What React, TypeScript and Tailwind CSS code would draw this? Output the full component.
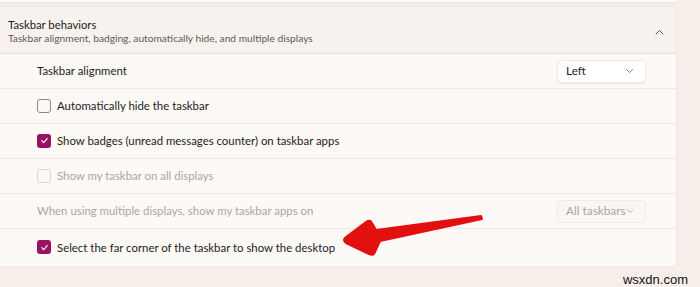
const FONT = "font-['Lato','Noto_Sans',sans-serif]";

function Check({ checked, disabled }: { checked?: boolean; disabled?: boolean }) {
  if (checked) {
    return (
      <span className="flex h-[14px] w-[14px] items-center justify-center rounded-[3px] bg-[#9b1262]">
        <svg width="9" height="9" viewBox="0 0 10 10" fill="none" stroke="white" strokeWidth="1.3" strokeLinecap="round" strokeLinejoin="round">
          <path d="M2 5.2 4.1 7.3 8 2.8" />
        </svg>
      </span>
    );
  }
  return (
    <span
      className={`h-[14px] w-[14px] rounded-[3px] border bg-[#fbf8f6] ${
        disabled ? "border-[#d9d4d1]" : "border-[#8c8886]"
      }`}
    />
  );
}

function Chevron({ up, color = "#6b6664" }: { up?: boolean; color?: string }) {
  return (
    <svg width="9" height="6" viewBox="0 0 9 6" fill="none" stroke={color} strokeWidth="1" strokeLinecap="round" strokeLinejoin="round">
      {up ? <path d="M1 5 4.5 1.5 8 5" /> : <path d="M1.5 1.5 4.5 4.5 7.5 1.5" />}
    </svg>
  );
}

function Select({ label, disabled }: { label: string; disabled?: boolean }) {
  return (
    <div
      className={`flex h-[23px] w-[89px] items-center justify-between whitespace-nowrap rounded-[4px] pl-[8px] pr-[11px] text-[11.8px] ${
        disabled
          ? "bg-[#fbf6f3] text-[#aaa6a4] border border-[#f1ebe8]"
          : "bg-white text-[#1c1c1c] shadow-[0_1px_2px_rgba(0,0,0,0.08)] border border-[#f0ebe8]"
      }`}
    >
      <span>{label}</span>
      <Chevron color={disabled ? "#b9b4b2" : "#8a8583"} />
    </div>
  );
}

function Row({ children, last }: { children: React.ReactNode; last?: boolean }) {
  return (
    <div
      className={`flex items-center justify-between pl-[37px] pr-[30px] ${
        last ? "h-[37px]" : "h-[35px] border-b border-[#efe9e6]"
      }`}
    >
      {children}
    </div>
  );
}

function CheckRow({ label, checked, disabled, last }: { label: string; checked?: boolean; disabled?: boolean; last?: boolean }) {
  return (
    <Row last={last}>
      <div className="flex items-center gap-[6px]">
        <Check checked={checked} disabled={disabled} />
        <span className={`text-[11.4px] ${disabled ? "text-[#aaa6a4]" : "text-[#1c1c1c]"}`}>{label}</span>
      </div>
    </Row>
  );
}

export default function App() {
  return (
    <div className={`relative h-[287px] w-[700px] overflow-hidden bg-[#f7eeea] ${FONT}`}>
      <div className="h-[3px] w-[677px] border-b border-[#ece5e2] bg-[#fcf8f6]" />
      <div className="mt-[3px] w-[677px] border border-l-0 border-[#eee7e4] rounded-r-[4px] bg-[#fdf9f7]">
        <div className="flex h-[47px] items-center justify-between border-b border-[#e9e2df] bg-[#f8f2ef] pl-[8px] pr-[12px] pt-[3px]">
          <div className="flex flex-col leading-[1.25]">
            <span className="text-[11.3px] text-[#1c1c1c]">Taskbar behaviors</span>
            <span className="text-[10.2px] text-[#5f5a58]">
              Taskbar alignment, badging, automatically hide, and multiple displays
            </span>
          </div>
          <Chevron up color="#5a5553" />
        </div>
        <Row>
          <span className="text-[11.4px] text-[#1c1c1c]">Taskbar alignment</span>
          <Select label="Left" />
        </Row>
        <CheckRow label="Automatically hide the taskbar" />
        <CheckRow label="Show badges (unread messages counter) on taskbar apps" checked />
        <CheckRow label="Show my taskbar on all displays" disabled />
        <Row>
          <span className="text-[11.4px] text-[#aaa6a4]">When using multiple displays, show my taskbar apps on</span>
          <Select label="All taskbars" disabled />
        </Row>
        <CheckRow label="Select the far corner of the taskbar to show the desktop" checked last />
      </div>
      <div className="flex justify-end pr-[12px] pt-[3px]">
        <span className="font-['Liberation_Sans',sans-serif] text-[13px] text-[#111]">wsxdn.com</span>
      </div>
      <svg className="absolute left-0 top-0" width="700" height="287" viewBox="0 0 700 287">
        <path
          d="M481 216 L376 230 L372 223 Q370 219 366 222 L346 237 Q342 240 346 243 L369 254 Q374 256 375 252 L380 241 L482 219 Z"
          fill="#e31010"
          stroke="#e31010"
          strokeWidth="2"
          strokeLinejoin="round"
        />
      </svg>
    </div>
  );
}
